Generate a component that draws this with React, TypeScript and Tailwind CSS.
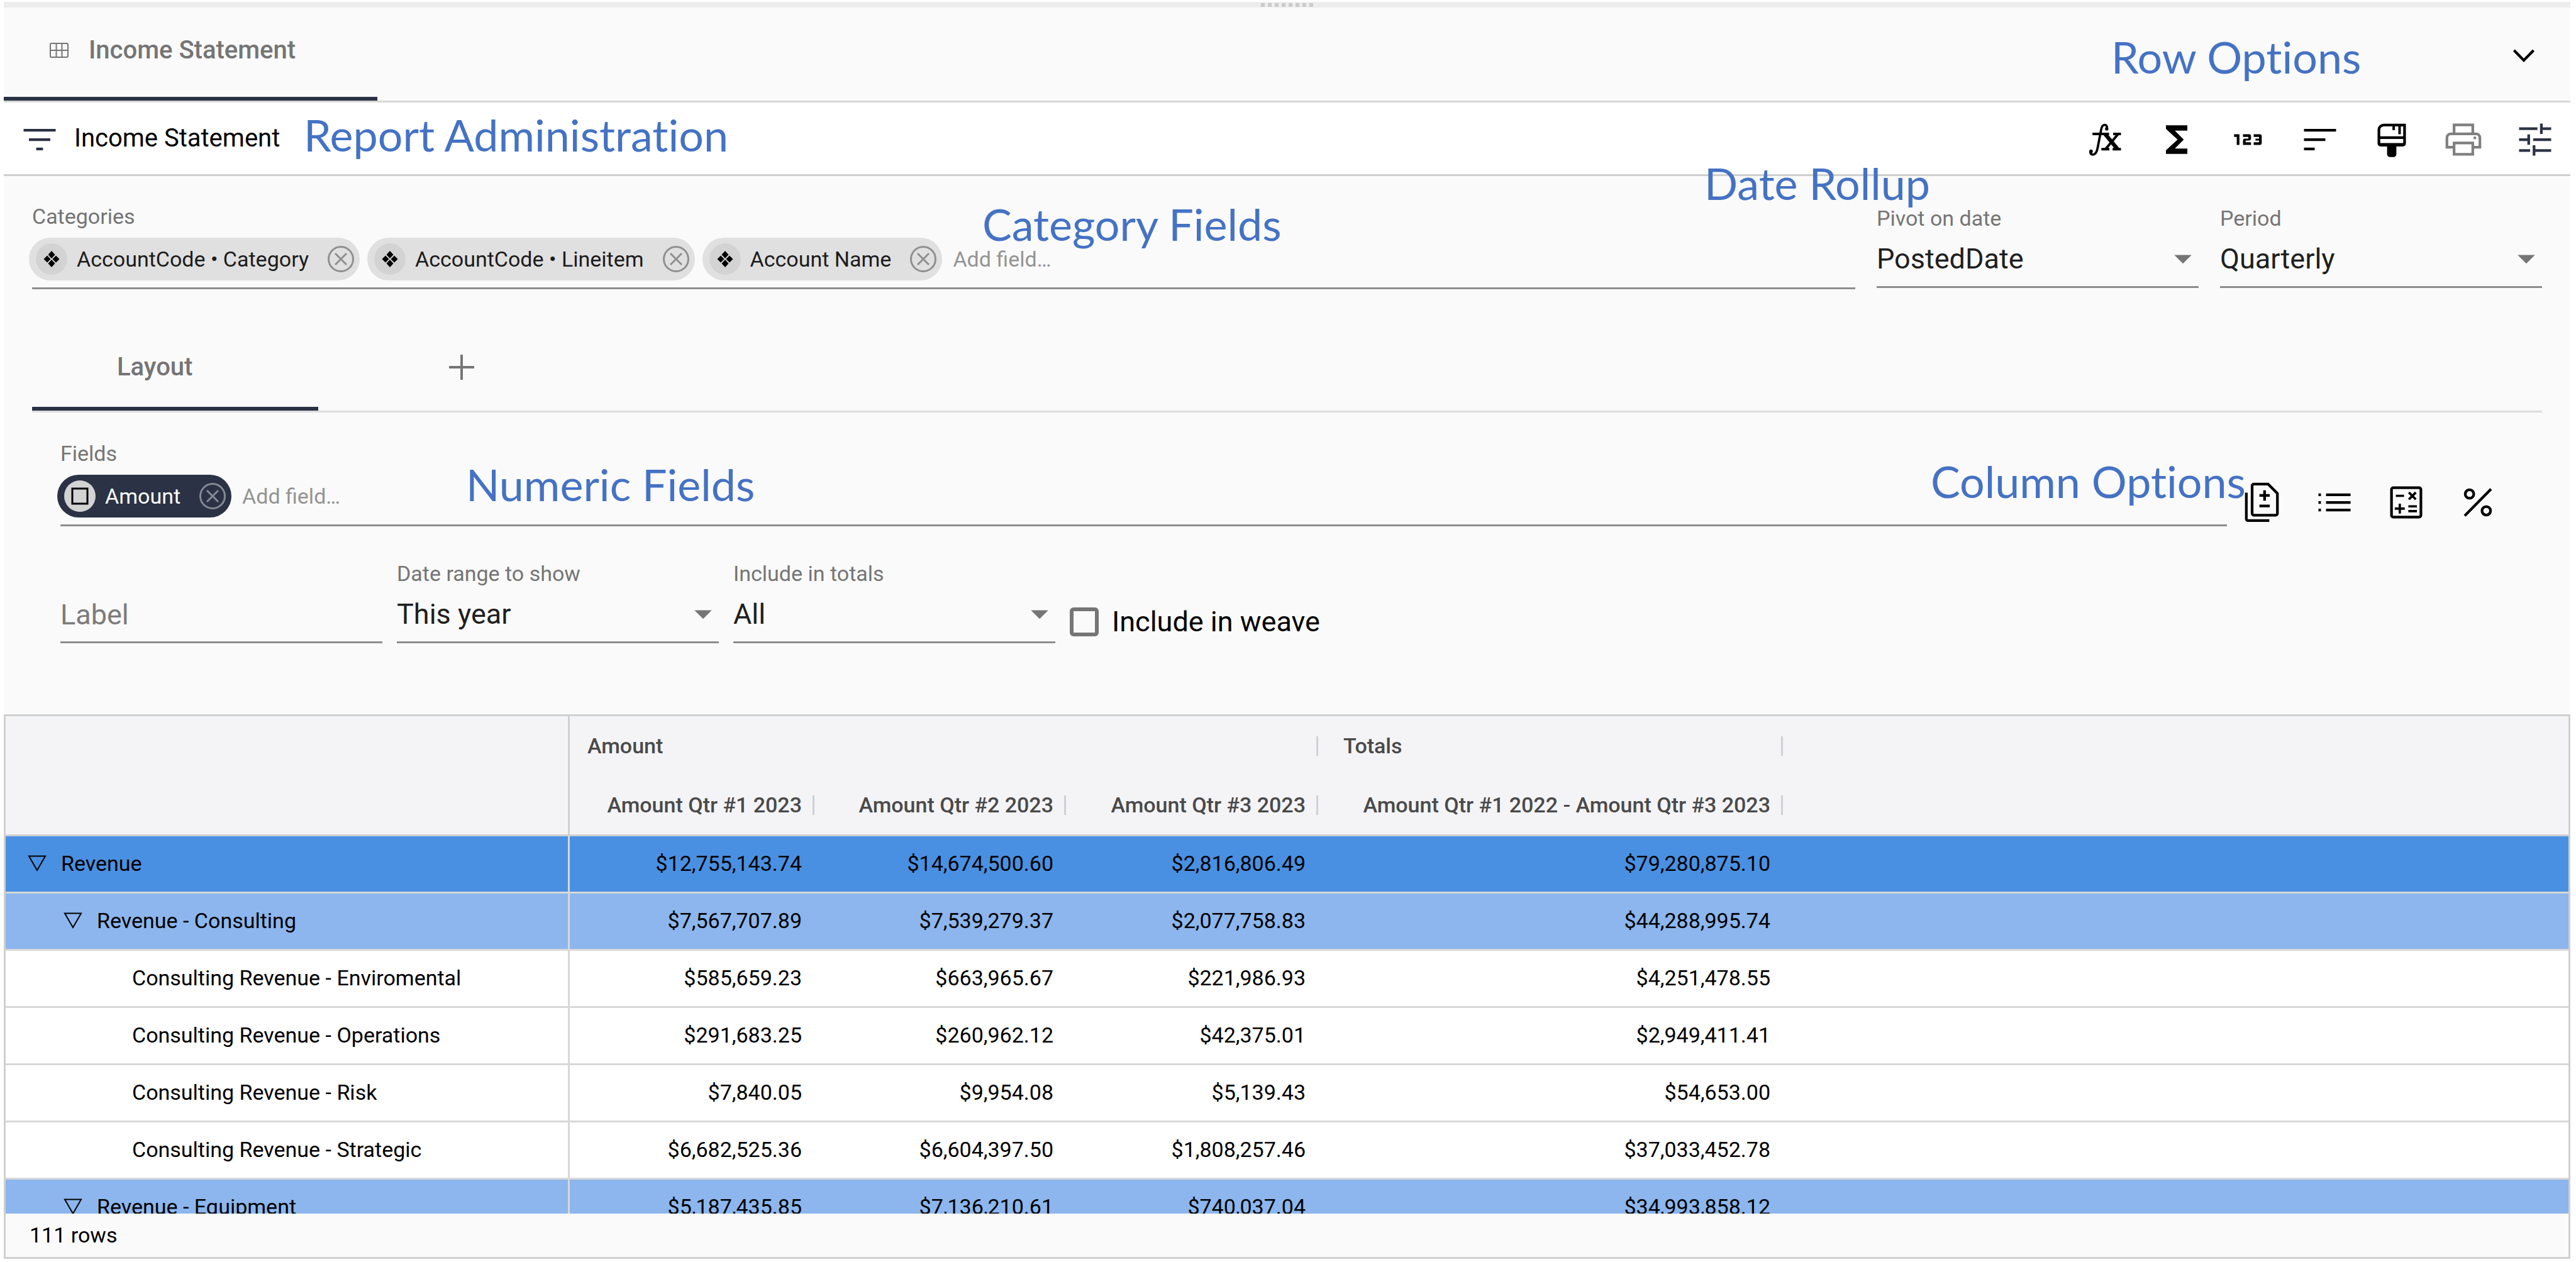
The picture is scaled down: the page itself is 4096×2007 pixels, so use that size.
import type { ReactNode } from 'react';
import { Md123, MdArrowDropDown, MdFunctions } from 'react-icons/md';

const ICON = 'size-[68px]';

function LineIcon({ children }: { children: ReactNode }) {
  return (
    <svg viewBox="0 0 24 24" className={ICON} fill="none" stroke="currentColor" strokeWidth="1.5">
      {children}
    </svg>
  );
}

function GridIcon() {
  return (
    <svg viewBox="0 0 30 24" className="h-[24px] w-[30px]" fill="none" stroke="currentColor" strokeWidth="2">
      <rect x="1" y="1" width="28" height="22" rx="2" />
      <path d="M10.5 1v22M19.5 1v22M1 12h28" />
    </svg>
  );
}

function ChevronIcon() {
  return (
    <LineIcon>
      <path d="M6.5 9.2L12 14.800l5.500-5.600" />
    </LineIcon>
  );
}

function FilterIcon() {
  return (
    <LineIcon>
      <path d="M3 6.750h18M6 12h12M10.100 17.250h3.800" />
    </LineIcon>
  );
}

function FxIcon() {
  return (
    <LineIcon>
      <path d="M13.1 6.2C13.4 4.6 12.8 3.7 11.9 3.7c-1.2 0-1.8 1-2.1 3L7.9 16.600C7.400 19.200 6.500 20.400 5.100 20.400c-1 0-1.400-.8-1.200-1.900" strokeWidth="1.3" />
      <circle cx="13" cy="6" r=".95" fill="currentColor" stroke="none" />
      <circle cx="4.200" cy="18.600" r="1" fill="currentColor" stroke="none" />
      <path d="M5 8.800h9.300M16.600 8.800H21M10 17.400h4.500M16.300 17.400H21" strokeWidth="1.4" />
      <path d="M12.200 9l6.900 8.400" strokeWidth="2.200" />
      <path d="M19.300 9l-7 8.400" strokeWidth="1.400" />
    </LineIcon>
  );
}

function SortIcon() {
  return (
    <LineIcon>
      <path d="M3 6.750h18M3 12h12M3 17.250h6" />
    </LineIcon>
  );
}

function BrushIcon() {
  return (
    <LineIcon>
      <path d="M7.600 3.800h11.600v10.400c0 .5-.4.900-.9.900H5.700c-.5 0-.9-.4-.9-.9V6.600c0-1.600 1.200-2.800 2.800-2.800z" />
      <path d="M4.800 10.900h14.400" />
      <path d="M13.100 4v2.700M16.400 4v5" strokeWidth="1.400" />
      <path d="M5 14.700h14" strokeWidth="1.600" />
      <path d="M9.400 15h5.200v5.200c0 .9-.7 1.600-1.600 1.600h-2c-.9 0-1.600-.7-1.600-1.600z" fill="currentColor" stroke="none" />
    </LineIcon>
  );
}

function PrintIcon() {
  return (
    <LineIcon>
      <path d="M6.750 8.500V3.750h10.500V8.500" />
      <path d="M6.500 16.250H2.750V11c0-1.400 1-2.250 2.250-2.250h14c1.250 0 2.250.85 2.250 2.250v5.250H17.500" />
      <path d="M6.750 13.900h10.500v6.350H6.750z" />
      <circle cx="18.400" cy="11" r=".8" fill="currentColor" stroke="none" />
    </LineIcon>
  );
}

function TuneIcon() {
  return (
    <LineIcon>
      <path d="M3 5.900h10.300M15.500 5.900H21M15.500 3v5.800" />
      <path d="M3 12h5.400M10.900 12H21M8.400 9.100v5.800" />
      <path d="M3 18.100h6.200M11.400 18.100H21M11.400 15.200V21" />
    </LineIcon>
  );
}

function DifferenceIcon() {
  return (
    <LineIcon>
      <path d="M7 1.750h8l5.200 5.200v11.300c0 .5-.4.900-.9.900H6.900c-.5 0-.9-.4-.9-.9V2.650c0-.5.4-.9 1-.9z" />
      <path d="M2.750 6.500v14.800c0 .5.400.9.900.9h12" />
      <path d="M13 5.200v5.800M10.100 8.100h5.800M10.100 14h5.800" />
    </LineIcon>
  );
}

function ListIcon() {
  return (
    <LineIcon>
      <path d="M7.250 7.750H21M7.250 12H21M7.250 16.250H21M3 7.750h1.400M3 12h1.400M3 16.250h1.400" />
    </LineIcon>
  );
}

function CalculateIcon() {
  return (
    <LineIcon>
      <rect x="3.750" y="3.750" width="16.500" height="16.500" rx="1" />
      <path d="M6.200 8.300h4.600M13.500 6.400l3.900 3.900M17.400 6.400l-3.900 3.900M8.400 12.700v5.600M5.600 15.500h5.600M13.200 14.200H18M13.200 16.900H18" strokeWidth="1.300" />
    </LineIcon>
  );
}

function PercentIcon() {
  return (
    <LineIcon>
      <circle cx="7.300" cy="7.300" r="2.400" />
      <circle cx="16.700" cy="16.700" r="2.400" />
      <path d="M19.400 4.500L4.600 19.500" />
    </LineIcon>
  );
}

function DiamondsIcon() {
  return (
    <svg viewBox="0 0 26 26" className="size-[26px]" fill="currentColor">
      <path d="M13 0l5.500 6L13 12 7.500 6zM13 14l5.500 6L13 26l-5.500-6zM6 7.500l5.500 5.500L6 18.500.500 13zM20 7.500l5.500 5.500-5.500 5.500-5.500-5.500z" />
    </svg>
  );
}

function SquareIcon() {
  return (
    <svg viewBox="0 0 28 28" className="size-[28px]" fill="none" stroke="currentColor" strokeWidth="3">
      <path d="M2 2h24v24H2z" />
    </svg>
  );
}

function RemoveIcon() {
  return (
    <svg viewBox="0 0 42 42" className="size-[42px]" fill="none" stroke="currentColor" strokeWidth="3">
      <circle cx="21" cy="21" r="19.500" />
      <path d="M12 12l18 18M30 12L12 30" />
    </svg>
  );
}

function PlusIcon() {
  return (
    <svg viewBox="0 0 40 40" className="size-[40px]" fill="none" stroke="currentColor" strokeWidth="4">
      <path d="M20 0v40M0 20h40" />
    </svg>
  );
}

function Triangle() {
  return (
    <svg viewBox="0 0 30 26" className="h-[26px] w-[30px] shrink-0" fill="none" stroke="currentColor" strokeWidth="2">
      <path d="M2 1.500h26L15 24z" />
    </svg>
  );
}

function Chip({ label, dark = false }: { label: string; dark?: boolean }) {
  return (
    <span
      className={
        'flex h-[68px] shrink-0 items-center rounded-full pr-[9px] pl-[11px] ' +
        (dark ? 'bg-[#2b3245] text-white' : 'bg-[#e0e0e0] text-[#1c1c1c]')
      }
    >
      <span className="flex size-[50px] items-center justify-center rounded-full bg-[#d3d3d3] text-black">
        {dark ? <SquareIcon /> : <DiamondsIcon />}
      </span>
      <span className="mr-[30px] ml-[15px]">{label}</span>
      <button aria-label={`Remove ${label}`} className={dark ? 'text-[#858a96]' : 'text-[#8f8f8f]'}>
        <RemoveIcon />
      </button>
    </span>
  );
}

function ChipField({ id, label, children }: { id: string; label: string; children: ReactNode }) {
  return (
    <div className="min-w-0 flex-1 border-b-3 border-[#8c8c8c] pb-[11px]">
      <label htmlFor={id} className="block leading-[38px] text-[#757575]">
        {label}
      </label>
      <div className="mt-[15px] -ml-[5px] flex gap-[12px]">
        {children}
        <input
          id={id}
          placeholder="Add field…"
          className="ml-[5px] min-w-0 flex-1 bg-transparent outline-none placeholder:text-[#949494]"
        />
      </div>
    </div>
  );
}

function SelectField({ id, label, value }: { id: string; label: string; value: string }) {
  return (
    <div className="w-[512px] border-b-3 border-[#8c8c8c]">
      <label htmlFor={id} className="block leading-[40px] text-[#757575]">
        {label}
      </label>
      <div className="relative">
        <select
          id={id}
          className="h-[88px] w-full appearance-none bg-transparent pt-[2px] text-[45px] leading-[64px] text-[#1f1f1f] outline-none"
        >
          <option>{value}</option>
        </select>
        <MdArrowDropDown className="pointer-events-none absolute top-[11px] -right-[8px] size-[66px] text-[#757575]" />
      </div>
    </div>
  );
}

function IconButton({ label, className = '', children }: { label: string; className?: string; children: ReactNode }) {
  return (
    <button aria-label={label} className={className}>
      {children}
    </button>
  );
}

const NOTES = [
  { text: 'Row Options', place: 'top-[48px] left-[3357px]' },
  { text: 'Report Administration', place: 'top-[172px] left-[483px]' },
  { text: 'Date Rollup', place: 'top-[249px] left-[2710px]' },
  { text: 'Category Fields', place: 'top-[314px] left-[1562px]' },
  { text: 'Numeric Fields', place: 'top-[728px] left-[741px]' },
  { text: 'Column Options', place: 'top-[723px] left-[3070px]' },
];

type Row = { level: 0 | 1 | 2; name: string; values: string[] };

const ROWS: Row[] = [
  { level: 0, name: 'Revenue', values: ['$12,755,143.74', '$14,674,500.60', '$2,816,806.49', '$79,280,875.10'] },
  { level: 1, name: 'Revenue - Consulting', values: ['$7,567,707.89', '$7,539,279.37', '$2,077,758.83', '$44,288,995.74'] },
  { level: 2, name: 'Consulting Revenue - Enviromental', values: ['$585,659.23', '$663,965.67', '$221,986.93', '$4,251,478.55'] },
  { level: 2, name: 'Consulting Revenue - Operations', values: ['$291,683.25', '$260,962.12', '$42,375.01', '$2,949,411.41'] },
  { level: 2, name: 'Consulting Revenue - Risk', values: ['$7,840.05', '$9,954.08', '$5,139.43', '$54,653.00'] },
  { level: 2, name: 'Consulting Revenue - Strategic', values: ['$6,682,525.36', '$6,604,397.50', '$1,808,257.46', '$37,033,452.78'] },
  { level: 1, name: 'Revenue - Equipment', values: ['$5,187,435.85', '$7,136,210.61', '$740,037.04', '$34,993,858.12'] },
];

const ROW_BG = ['bg-[#4a90e2]', 'bg-[#8cb6ed]', 'bg-white'];
const ROW_INDENT = ['pl-[35px]', 'pl-[92px]', 'pl-[201px]'];

function Separator() {
  return <span className="h-[31px] w-[3px] bg-[#cfd0d3]" />;
}

function GroupHead({ label, span, pad }: { label: string; span: number; pad: string }) {
  return (
    <th colSpan={span} scope="colgroup" className="h-[94px] p-0 font-medium">
      <div className={'flex items-center justify-between ' + pad}>
        {label}
        <Separator />
      </div>
    </th>
  );
}

function ColumnHead({ label }: { label: string }) {
  return (
    <th scope="col" className="h-[97px] border-b-3 border-[#cfd0d0] p-0 font-medium">
      <div className="flex items-center justify-end gap-[17px]">
        {label}
        <Separator />
      </div>
    </th>
  );
}

function ReportTable() {
  return (
    <table className="w-full table-fixed border-separate border-spacing-0 whitespace-nowrap text-black">
      <colgroup>
        <col className="w-[897px]" />
        <col className="w-[389px]" />
        <col className="w-[400px]" />
        <col className="w-[401px]" />
        <col className="w-[739px]" />
        <col />
      </colgroup>
      <thead className="bg-[#f4f4f7] text-[#4a4a4a]">
        <tr>
          <td rowSpan={2} className="border-r-3 border-b-3 border-[#cfd0d0]" />
          <GroupHead label="Amount" span={3} pad="pl-[28px]" />
          <GroupHead label="Totals" span={1} pad="pl-[40px]" />
          <td />
        </tr>
        <tr>
          <ColumnHead label="Amount Qtr #1 2023" />
          <ColumnHead label="Amount Qtr #2 2023" />
          <ColumnHead label="Amount Qtr #3 2023" />
          <ColumnHead label="Amount Qtr #1 2022 - Amount Qtr #3 2023" />
          <td className="border-b-3 border-[#cfd0d0]" />
        </tr>
      </thead>
      <tbody>
        {ROWS.map((row) => (
          <tr key={row.name} className={ROW_BG[row.level]}>
            <th scope="row" className="h-[91px] border-r-3 border-b-3 border-[#d7d8d8] px-0 pt-0 pb-[2px] text-left font-normal">
              <div className={'flex items-center gap-[23px] ' + ROW_INDENT[row.level]}>
                {row.level < 2 && (
                  <button aria-label={`Collapse ${row.name}`}>
                    <Triangle />
                  </button>
                )}
                {row.name}
              </div>
            </th>
            {row.values.map((value, i) => (
              <td key={i} className="border-b-3 border-[#d7d8d8] pt-0 pr-[20px] pb-[2px] pl-0 text-right">
                {value}
              </td>
            ))}
            <td className="border-b-3 border-[#d7d8d8]" />
          </tr>
        ))}
      </tbody>
    </table>
  );
}

export default function App() {
  return (
    <div className="relative flex h-screen flex-col bg-white pt-[3px] pr-[9px] pb-[5px] pl-[6px] font-['Roboto',sans-serif] text-[34px] leading-[40px]">
      <div className="flex h-[9px] shrink-0 items-center justify-center gap-[5px] bg-[#ededed]">
        {Array.from({ length: 8 }, (_, i) => (
          <span key={i} className="size-[6px] bg-[#cbcbcb]" />
        ))}
      </div>

      <header className="flex h-[151px] shrink-0 justify-between border-b-3 border-[#d8d8d8] bg-[#fafafa] pr-[40px]">
        <button className="flex w-[594px] items-center gap-[32px] border-b-6 border-[#2b3245] pb-[6px] pl-[73px] text-[40px] font-medium text-[#757575]">
          <GridIcon />
          Income Statement
        </button>
        <IconButton label="Collapse panel" className="pt-[4px] text-black">
          <ChevronIcon />
        </IconButton>
      </header>

      <div className="flex h-[117px] shrink-0 items-center justify-between border-b-3 border-[#cfcfcf] bg-white pr-[22px] pl-[23px]">
        <div className="flex items-center gap-[21px]">
          <IconButton label="Filter" className="pt-[4px] text-[#2b3245]">
            <FilterIcon />
          </IconButton>
          <h1 className="text-[40px] text-black">Income Statement</h1>
        </div>
        <div className="flex gap-[46px] pt-[4px] text-black">
          <IconButton label="Formulas">
            <FxIcon />
          </IconButton>
          <IconButton label="Totals">
            <MdFunctions className={ICON} />
          </IconButton>
          <IconButton label="Number format">
            <Md123 className={ICON} />
          </IconButton>
          <IconButton label="Sort">
            <SortIcon />
          </IconButton>
          <IconButton label="Styling">
            <BrushIcon />
          </IconButton>
          <IconButton label="Print" className="text-[#808080]">
            <PrintIcon />
          </IconButton>
          <IconButton label="Settings" className="text-[#2b3245]">
            <TuneIcon />
          </IconButton>
        </div>
      </div>

      <main className="shrink-0 bg-[#fafafa] px-[45px] pt-[45px] pb-[113px]">
        <div className="flex items-start gap-[34px]">
          <ChipField id="categories" label="Categories">
            <Chip label="AccountCode • Category" />
            <Chip label="AccountCode • Lineitem" />
            <Chip label="Account Name" />
          </ChipField>
          <div className="flex gap-[34px] pt-[2px]">
            <SelectField id="pivot" label="Pivot on date" value="PostedDate" />
            <SelectField id="period" label="Period" value="Quarterly" />
          </div>
        </div>

        <div className="mt-[55px] flex h-[141px] border-b-3 border-[#dcdcdc] text-[#757575]">
          <button className="w-[455px] border-b-6 border-[#2b3245] pt-[6px] pl-[135px] text-left text-[40px] font-medium">
            Layout
          </button>
          <button aria-label="Add layout" className="flex w-[455px] items-center justify-center">
            <PlusIcon />
          </button>
        </div>

        <section className="pt-[46px] pr-[68px] pl-[45px]">
          <div className="flex items-start gap-[23px]">
            <ChipField id="fields" label="Fields">
              <Chip label="Amount" dark />
            </ChipField>
            <div className="flex gap-[46px] pt-[63px] text-black">
              <IconButton label="Difference">
                <DifferenceIcon />
              </IconButton>
              <IconButton label="List">
                <ListIcon />
              </IconButton>
              <IconButton label="Calculate">
                <CalculateIcon />
              </IconButton>
              <IconButton label="Percent">
                <PercentIcon />
              </IconButton>
            </div>
          </div>

          <div className="mt-[55px] flex items-start gap-[23px]">
            <div className="w-[512px] border-b-3 border-[#8c8c8c] pt-[40px]">
              <input
                aria-label="Label"
                placeholder="Label"
                className="h-[88px] w-full bg-transparent pt-[2px] text-[45px] leading-[64px] outline-none placeholder:text-[#7c7c7c]"
              />
            </div>
            <SelectField id="range" label="Date range to show" value="This year" />
            <SelectField id="totals" label="Include in totals" value="All" />
            <label className="flex items-center gap-[21px] pt-[71px] text-[45px] leading-[52px] text-black">
              <input type="checkbox" className="size-[46px] appearance-none rounded-[6px] border-6 border-[#757575]" />
              Include in weave
            </label>
          </div>
        </section>
      </main>

      <div className="flex min-h-0 flex-1 flex-col border-3 border-[#cfd0d0]">
        <div className="min-h-0 flex-1 overflow-hidden">
          <ReportTable />
        </div>
        <footer className="flex h-[69px] shrink-0 items-center bg-[#fafafa] pb-[2px] pl-[38px] text-black">111 rows</footer>
      </div>

      {NOTES.map((note) => (
        <span
          key={note.text}
          className={
            "pointer-events-none absolute font-['Lato',sans-serif] text-[70px] leading-[84px] whitespace-nowrap text-[#4472c4] [font-variant-ligatures:none] " +
            note.place
          }
        >
          {note.text}
        </span>
      ))}
    </div>
  );
}
